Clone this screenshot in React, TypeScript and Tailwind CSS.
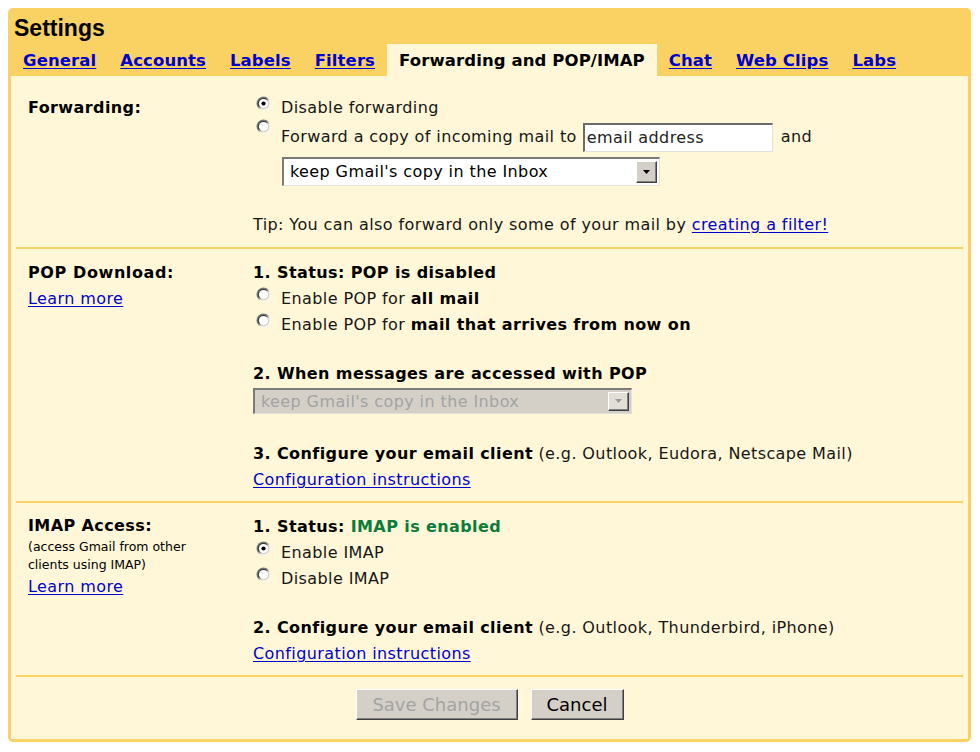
import { useId } from 'react';
import clsx from 'clsx';

const LINK = 'text-[#0000cc] underline underline-offset-2';

function Radio({ checked = false, className }: { checked?: boolean; className?: string }) {
  const id = useId();
  return (
    <svg width="15" height="15" viewBox="0 0 15 15" className={clsx('shrink-0', className)}>
      <defs>
        <linearGradient id={`${id}o`} x1="0" y1="0" x2="1" y2="1">
          <stop offset="0.4" stopColor="#7c7c7c" />
          <stop offset="0.62" stopColor="#f4f2ec" />
        </linearGradient>
        <linearGradient id={`${id}i`} x1="0" y1="0" x2="1" y2="1">
          <stop offset="0.4" stopColor="#3c3c3c" />
          <stop offset="0.62" stopColor="#d4d0c8" />
        </linearGradient>
      </defs>
      <circle cx="7.5" cy="7.5" r="7" fill={`url(#${id}o)`} />
      <circle cx="7.5" cy="7.5" r="5.8" fill={`url(#${id}i)`} />
      <circle cx="7.5" cy="7.5" r="4.6" fill="#ffffff" />
      {checked && <circle cx="7.5" cy="7.5" r="2.1" fill="#000000" />}
    </svg>
  );
}

function RadioLine({ checked, children }: { checked?: boolean; children: React.ReactNode }) {
  return (
    <div className="flex h-[26px] items-start">
      <Radio checked={checked} className="ml-[3px] mt-[1px]" />
      <span className="ml-[10px] leading-[26px]">{children}</span>
    </div>
  );
}

function Dropdown({ disabled = false, className }: { disabled?: boolean; className?: string }) {
  return (
    <div
      className={clsx(
        'flex items-center border-t-2 border-l-2 border-b border-r border-t-[#7a7a7a] border-l-[#7a7a7a] border-b-[#e4e1da] border-r-[#e4e1da] pr-[2px]',
        disabled ? 'bg-[#d4d0c8] text-[#a3a3a3]' : 'bg-white text-black',
        className,
      )}
    >
      <span className="flex-1 pl-[6px] leading-[24px]">keep Gmail's copy in the Inbox</span>
      <span
        className={clsx(
          'flex h-[calc(100%-4px)] w-[21px] items-center justify-center border border-t-white border-l-white border-b-[#404040] border-r-[#404040] shadow-[inset_-1px_-1px_0_#808080]',
          disabled ? 'bg-[#e2dfd8]' : 'bg-[#d4d0c8]',
        )}
      >
        <svg width="8" height="5" viewBox="0 0 8 5">
          <path d="M0 0h7L3.5 4z" fill={disabled ? '#9a9a9a' : '#000'} />
        </svg>
      </span>
    </div>
  );
}

function Divider() {
  return <div className="mx-[5px] h-[2px] bg-[#fad163]" />;
}

export default function App() {
  const tabs = ['General', 'Accounts', 'Labels', 'Filters', 'Forwarding and POP/IMAP', 'Chat', 'Web Clips', 'Labs'];

  return (
    <div className="min-h-screen bg-white p-2 font-['DejaVu_Sans',sans-serif] text-[16px] tracking-[0.4px] text-[#161616]">
      <div className="w-[963px] rounded-[5px] bg-[#fad163] px-[3px] pb-[3px]">
        <div className="h-[36px] pl-[3px] pt-[8px] font-['Liberation_Sans',Arial,sans-serif] text-[23px] font-bold leading-[24px] tracking-normal text-black">
          Settings
        </div>
        <div className="flex h-[32px] text-[16.5px] font-bold tracking-[0.1px]">
          {tabs.map((t) =>
            t === 'Forwarding and POP/IMAP' ? (
              <div key={t} className="bg-[#fff7d7] px-3 pt-[2px] leading-[30px] text-black">
                {t}
              </div>
            ) : (
              <a key={t} href="#" className={clsx(LINK, 'px-3 pt-[2px] leading-[30px]')}>
                {t}
              </a>
            ),
          )}
        </div>

        <div className="bg-[#fff7d7]">
          {/* Forwarding */}
          <div className="flex pb-[9px] pl-[17px] pt-[19px]">
            <div className="w-[225px] shrink-0 font-bold leading-[26px] text-black">Forwarding:</div>
            <div className="flex-1">
              <RadioLine checked>Disable forwarding</RadioLine>
              <div className="flex h-[32px] items-center">
                <Radio className="ml-[3px] mt-[-2px] self-start" />
                <span className="ml-[10px] leading-[26px]">Forward a copy of incoming mail to</span>
                <div className="ml-[6px] flex h-[29px] w-[190px] items-center border-t-2 border-l-2 border-b border-r border-t-[#6a6a6a] border-l-[#6a6a6a] border-b-[#e4e1da] border-r-[#e4e1da] bg-white pl-[2px] text-[#222]">
                  email address
                </div>
                <span className="ml-[8px] leading-[26px]">and</span>
              </div>
              <Dropdown className="ml-[29px] mt-[4px] h-[29px] w-[378px]" />
              <div className="mt-[26px] leading-[26px]">
                Tip: You can also forward only some of your mail by{' '}
                <a href="#" className={LINK}>
                  creating a filter!
                </a>
              </div>
            </div>
          </div>
          <Divider />

          {/* POP */}
          <div className="flex pb-[8px] pl-[17px] pt-[11px]">
            <div className="w-[225px] shrink-0 leading-[26px]">
              <div className="font-bold tracking-[0.6px] text-black">POP Download:</div>
              <a href="#" className={LINK}>
                Learn more
              </a>
            </div>
            <div className="flex-1 leading-[26px]">
              <div className="font-bold text-black">1. Status: POP is disabled</div>
              <RadioLine>
                Enable POP for <b className="text-black">all mail</b>
              </RadioLine>
              <RadioLine>
                Enable POP for <b className="text-black">mail that arrives from now on</b>
              </RadioLine>
              <div className="mt-[23px] font-bold text-black">2. When messages are accessed with POP</div>
              <Dropdown disabled className="mt-[1px] h-[26px] w-[379px]" />
              <div className="mt-[27px]">
                <b className="text-black">3. Configure your email client</b> (e.g. Outlook, Eudora, Netscape Mail)
              </div>
              <a href="#" className={LINK}>
                Configuration instructions
              </a>
            </div>
          </div>
          <Divider />

          {/* IMAP */}
          <div className="flex pb-[8px] pl-[17px] pt-[11px]">
            <div className="w-[225px] shrink-0">
              <div className="font-bold leading-[24px] text-black">IMAP Access:</div>
              <div className="text-[12.5px] leading-[18px] tracking-normal text-black">
                (access Gmail from other
                <br />
                clients using IMAP)
              </div>
              <a href="#" className={clsx(LINK, 'leading-[26px]')}>
                Learn more
              </a>
            </div>
            <div className="flex-1 leading-[26px]">
              <div className="font-bold text-black">
                1. Status: <span className="text-[#0b7b3c]">IMAP is enabled</span>
              </div>
              <RadioLine checked>Enable IMAP</RadioLine>
              <RadioLine>Disable IMAP</RadioLine>
              <div className="mt-[23px]">
                <b className="text-black">2. Configure your email client</b> (e.g. Outlook, Thunderbird, iPhone)
              </div>
              <a href="#" className={LINK}>
                Configuration instructions
              </a>
            </div>
          </div>
          <Divider />

          <div className="flex justify-center gap-[13px] pb-[19px] pt-[12px] text-[18px] tracking-normal">
            <button
              disabled
              className="h-[31px] w-[162px] border border-t-white border-l-white border-b-[#404040] border-r-[#404040] bg-[#d4d0c8] text-[#a3a3a3] shadow-[inset_-1px_-1px_0_#808080]"
            >
              Save Changes
            </button>
            <button className="h-[31px] w-[93px] border border-t-white border-l-white border-b-[#404040] border-r-[#404040] bg-[#d4d0c8] text-black shadow-[inset_-1px_-1px_0_#808080]">
              Cancel
            </button>
          </div>
        </div>
      </div>
    </div>
  );
}
